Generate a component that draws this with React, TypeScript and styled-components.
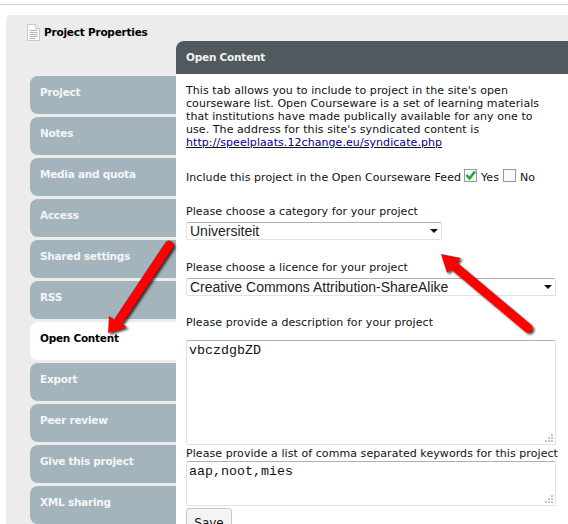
import styled, { createGlobalStyle } from "styled-components";

const tabs = [
  "Project",
  "Notes",
  "Media and quota",
  "Access",
  "Shared settings",
  "RSS",
  "Open Content",
  "Export",
  "Peer review",
  "Give this project",
  "XML sharing",
];

const DocIcon = () => (
  <svg width="15" height="17" viewBox="0 0 15 17">
    <path d="M1.5.5h8l4 4v12h-12z" fill="#fbfbfb" stroke="#c9c9c9" />
    <path d="M9.5.5v4h4" fill="#eee" stroke="#c9c9c9" />
    <path d="M3.5 6.5h8M3.5 8.5h8M3.5 10.5h8M3.5 12.5h8M3.5 14.5h6" stroke="#b5b5b5" />
  </svg>
);

const Grip = () => (
  <GripIcon width="9" height="9" viewBox="0 0 9 9">
    <path d="M6 0h2v2H6zM6 3h2v2H6zM6 6h2v2H6zM3 6h2v2H3zM0 6h2v2H0zM3 3h2v2H3z" fill="#c4c4c4" />
  </GripIcon>
);

const Arrow = ({ d, head }: { d: string; head: string }) => (
  <>
    <g transform="translate(2 2)" opacity="0.7" filter="url(#arrowBlur)">
      <path d={d} stroke="#000" strokeWidth="9" strokeLinecap="round" fill="none" />
      <path d={head} fill="#000" />
    </g>
    <path d={d} stroke="#f00" strokeWidth="9" strokeLinecap="round" fill="none" />
    <path d={head} fill="#f00" />
  </>
);

const App = () => {
  return (
    <Page>
      <GlobalStyle />
      <TopRule />
      <Panel>
        <Title>
          <DocIcon />
          <span>Project Properties</span>
        </Title>
        <Columns>
          <Tabs>
            {tabs.map((t) => (
              <Tab key={t} $active={t === "Open Content"}>
                {t}
              </Tab>
            ))}
          </Tabs>
          <Main>
            <MainHeader>Open Content</MainHeader>
            <MainBody>
              <Intro>
                This tab allows you to include to project in the site's open
                <br />
                courseware list. Open Courseware is a set of learning materials
                <br />
                that institutions have made publically available for any one to
                <br />
                use. The address for this site's syndicated content is
                <br />
                <a href="#feed">http://speelplaats.12change.eu/syndicate.php</a>
              </Intro>
              <FeedRow>
                Include this project in the Open Courseware Feed
                <Check $left={3}>
                  <svg width="11" height="11" viewBox="0 0 11 11">
                    <path d="M1.5 5l3 3.5L10 1.5" stroke="#2ea02e" strokeWidth="2.6" fill="none" />
                  </svg>
                </Check>
                Yes
                <Check $left={4} />
                No
              </FeedRow>
              <Label $top={20}>Please choose a category for your project</Label>
              <SelectBox $width={256}>
                <span>Universiteit</span>
                <Caret />
              </SelectBox>
              <Label $top={21}>Please choose a licence for your project</Label>
              <SelectBox $width={370}>
                <span>Creative Commons Attribution-ShareAlike</span>
                <Caret />
              </SelectBox>
              <Label $top={20}>Please provide a description for your project</Label>
              <AreaWrap $top={11}>
                <Area $height={105} defaultValue="vbczdgbZD" />
                <Grip />
              </AreaWrap>
              <Label $top={2}>Please provide a list of comma separated keywords for this project</Label>
              <AreaWrap $top={1}>
                <Area $height={45} defaultValue="aap,noot,mies" />
                <Grip />
              </AreaWrap>
              <SaveButton type="button">Save</SaveButton>
            </MainBody>
          </Main>
        </Columns>
      </Panel>
      <Overlay width="568" height="524" viewBox="0 0 568 524">
        <defs>
          <filter id="arrowBlur">
            <feGaussianBlur stdDeviation="1.2" />
          </filter>
        </defs>
        <Arrow d="M169 245L119 320" head="M108 333L109 316L127 327z" />
        <Arrow d="M528 328L453 265" head="M441 254L461 258L447 273z" />
      </Overlay>
    </Page>
  );
};

export default App;

const GlobalStyle = createGlobalStyle`
  html, body {
    margin: 0;
    height: 524px;
    overflow: hidden;
    background: #fff;
  }
`;

const Page = styled.div`
  position: relative;
  width: 568px;
  height: 524px;
  overflow: hidden;
  font-family: "DejaVu Sans", Verdana, sans-serif;
  font-size: 11px;
  line-height: 13px;
  letter-spacing: 0.07px;
  color: #111;
`;

const TopRule = styled.div`
  height: 1px;
  margin-top: 4px;
  background: #d0d0d0;
`;

const Panel = styled.div`
  margin: 10px 0 0 6px;
  padding-top: 1px;
  height: 600px;
  background: #ececec;
  border-top-left-radius: 5px;
`;

const Title = styled.div`
  display: flex;
  align-items: center;
  gap: 3px;
  height: 16px;
  margin: 8px 0 1px 20px;
  font-size: 10.5px;
  font-weight: bold;
  letter-spacing: -0.22px;
  color: #000;
`;

const Columns = styled.div`
  display: flex;
  padding-left: 24px;
`;

const Tabs = styled.div`
  display: flex;
  flex-direction: column;
  gap: 3px;
  width: 146px;
  padding-top: 35px;
`;

const Tab = styled.div<{ $active?: boolean }>`
  height: 38px;
  padding: 10px 0 0 10px;
  box-sizing: border-box;
  border-radius: 8px 0 0 8px;
  font-size: 10.5px;
  font-weight: bold;
  letter-spacing: -0.25px;
  background: ${(p) => (p.$active ? "#fff" : "#a3b4bd")};
  color: ${(p) => (p.$active ? "#000" : "#f4f6f7")};
`;

const Main = styled.div`
  flex: 1;
  background: #fff;
  border-top-left-radius: 8px;
`;

const MainHeader = styled.div`
  height: 33px;
  padding: 10px 0 0 10px;
  box-sizing: border-box;
  background: #50595e;
  border-top-left-radius: 8px;
  font-size: 10.5px;
  font-weight: bold;
  letter-spacing: -0.22px;
  color: #f2f2f2;
`;

const MainBody = styled.div`
  padding: 10px 0 0 10px;
`;

const Intro = styled.div`
  a {
    color: #00007f;
  }
`;

const FeedRow = styled.div`
  display: flex;
  align-items: center;
  height: 15px;
  margin-top: 21px;
`;

const Check = styled.span<{ $left: number }>`
  display: inline-flex;
  width: 11px;
  height: 11px;
  margin: -4px 4px 0 ${(p) => p.$left}px;
  border: 1px solid #8c9cb0;
  background: #f8f9fb;
`;

const Label = styled.div<{ $top: number }>`
  margin-top: ${(p) => p.$top}px;
`;

const SelectBox = styled.div<{ $width: number }>`
  position: relative;
  width: ${(p) => p.$width}px;
  height: 18px;
  margin-top: 4px;
  padding-left: 3px;
  box-sizing: border-box;
  border: 1px solid #dfe3e8;
  border-top-color: #b0b0b0;
  border-radius: 2px;
  background: #fff;
  font-family: "Liberation Sans", Arial, sans-serif;
  font-size: 14px;
  line-height: 16px;
  letter-spacing: 0;
  color: #222;
`;

const Caret = styled.i`
  position: absolute;
  right: 3px;
  top: 6px;
  width: 0;
  height: 0;
  border-left: 4px solid transparent;
  border-right: 4px solid transparent;
  border-top: 4px solid #111;
`;

const AreaWrap = styled.div<{ $top: number }>`
  position: relative;
  width: 370px;
  margin-top: ${(p) => p.$top}px;
`;

const Area = styled.textarea<{ $height: number }>`
  display: block;
  width: 100%;
  height: ${(p) => p.$height}px;
  padding: 2px;
  box-sizing: border-box;
  border: 1px solid #dfe3e8;
  border-top-color: #b0b0b0;
  border-radius: 2px;
  outline: none;
  resize: none;
  font-family: "Liberation Mono", "Courier New", monospace;
  font-size: 13.33px;
  line-height: 15px;
  color: #111;
`;

const GripIcon = styled.svg`
  position: absolute;
  right: 2px;
  bottom: 2px;
`;

const SaveButton = styled.button`
  display: block;
  width: 46px;
  height: 29px;
  margin-top: 2px;
  padding: 0;
  background: #f4f4f4;
  border: 1px solid #c8c8c8;
  border-radius: 3px;
  font-family: "DejaVu Sans", Verdana, sans-serif;
  font-size: 12px;
  color: #111;
`;

const Overlay = styled.svg`
  position: absolute;
  left: 0;
  top: 0;
  pointer-events: none;
`;
